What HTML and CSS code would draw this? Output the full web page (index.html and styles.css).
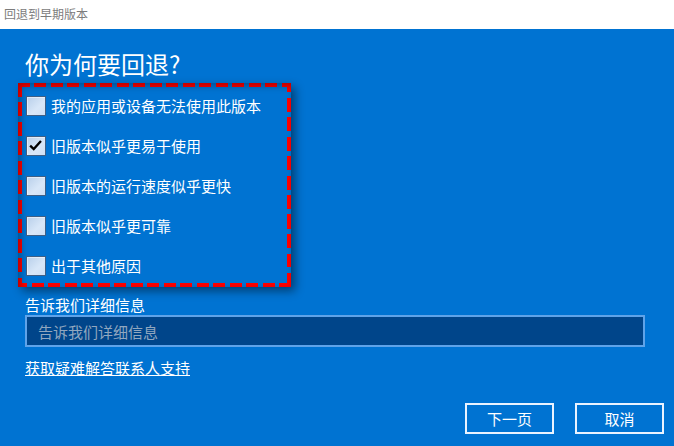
FILE: index.html
```html
<!DOCTYPE html>
<html lang="zh-CN">
<head>
    <meta charset="UTF-8">
    <meta name="viewport" content="width=device-width, initial-scale=1.0">
    <title>回退到早期版本</title>
<link rel="stylesheet" href="styles.css">
</head>
<body>
    <div class="title-bar">回退到早期版本</div>

    <div class="main">
        <h1 class="heading">你为何要回退?</h1>

        <div class="reasons">
            <label class="reason"><span class="box"></span>我的应用或设备无法使用此版本</label>
            <label class="reason"><span class="box checked">
                <svg viewBox="0 0 20 20" width="18" height="18"><path d="M3.5 9.5 L7.5 13.5 L15.5 4.5" fill="none" stroke="#000" stroke-width="2.6"/></svg>
            </span>旧版本似乎更易于使用</label>
            <label class="reason"><span class="box"></span>旧版本的运行速度似乎更快</label>
            <label class="reason"><span class="box"></span>旧版本似乎更可靠</label>
            <label class="reason"><span class="box"></span>出于其他原因</label>
        </div>

        <div class="details-label">告诉我们详细信息</div>
        <input type="text" class="details" placeholder="告诉我们详细信息">

        <a href="#" class="help-link">获取疑难解答联系人支持</a>

        <div class="actions">
            <button class="btn">下一页</button>
            <button class="btn">取消</button>
        </div>
    </div>
</body>
</html>
```

FILE: styles.css
```css
* {
    margin: 0;
    padding: 0;
    box-sizing: border-box;
    font-family: "Noto Sans CJK SC", "Liberation Sans", sans-serif;
}
body {
    width: 674px;
    height: 446px;
    overflow: hidden;
    background-color: #0073d2;
    color: #fff;
}
.title-bar {
    height: 29px;
    line-height: 27px;
    padding-left: 4px;
    background: #fff;
    color: #7c7c7c;
    font-size: 12px;
}
.main {
    display: flex;
    flex-direction: column;
    height: 417px;
    padding: 0 10px 12px 25px;
}
.heading {
    margin-top: 19px;
    font-size: 24px;
    line-height: 32px;
    font-weight: normal;
}
/* red dashed frame, drawn with gradients so the dashes come out long */
.reasons {
    display: flex;
    flex-direction: column;
    gap: 20px;
    width: 273px;
    height: 204px;
    margin: 3px 0 0 -7px;
    padding: 13px 0 0 8px;
    background:
        repeating-linear-gradient(90deg, #ff0000 0 12px, transparent 12px 16.5px) left top / 100% 4px no-repeat,
        repeating-linear-gradient(270deg, #ff0000 0 12px, transparent 12px 16.5px) left bottom / 100% 4px no-repeat,
        repeating-linear-gradient(180deg, #ff0000 0 14px, transparent 14px 19.5px) left top / 4px 100% no-repeat,
        repeating-linear-gradient(0deg, #ff0000 0 14px, transparent 14px 19.5px) right top / 4px 100% no-repeat;
    box-shadow: 4px 4px 9px rgba(0, 0, 0, 0.45),
        inset 3px 3px 7px rgba(0, 0, 0, 0.3);
}
.reason {
    display: flex;
    align-items: center;
    gap: 5px;
    height: 20px;
    font-size: 15px;
    line-height: 20px;
}
.box {
    display: grid;
    place-items: center;
    width: 20px;
    height: 20px;
    border: 1px solid #3f5f85;
    background: linear-gradient(135deg, #b8cfea, #d8e7f8 60%, #cfe0f4);
    box-shadow: inset 1px 1px 0 rgba(255, 255, 255, 0.5);
}
.details-label {
    margin-top: 8px;
    font-size: 15px;
    line-height: 20px;
}
.details {
    width: 620px;
    height: 32px;
    padding: 0 11px;
    border: 2px solid #5fa3e9;
    outline: none;
    background: #00458a;
    color: #fff;
    font-size: 15px;
}
.details::placeholder {
    color: #91a7bf;
}
.help-link {
    align-self: flex-start;
    margin-top: 11px;
    color: #fff;
    font-size: 15px;
    line-height: 20px;
    text-decoration: underline;
}
.actions {
    display: flex;
    justify-content: flex-end;
    gap: 21px;
    margin-top: auto;
}
.btn {
    width: 89px;
    height: 31px;
    border: 2px solid #eaf3ff;
    background: transparent;
    color: #fff;
    font-size: 15px;
}
```
